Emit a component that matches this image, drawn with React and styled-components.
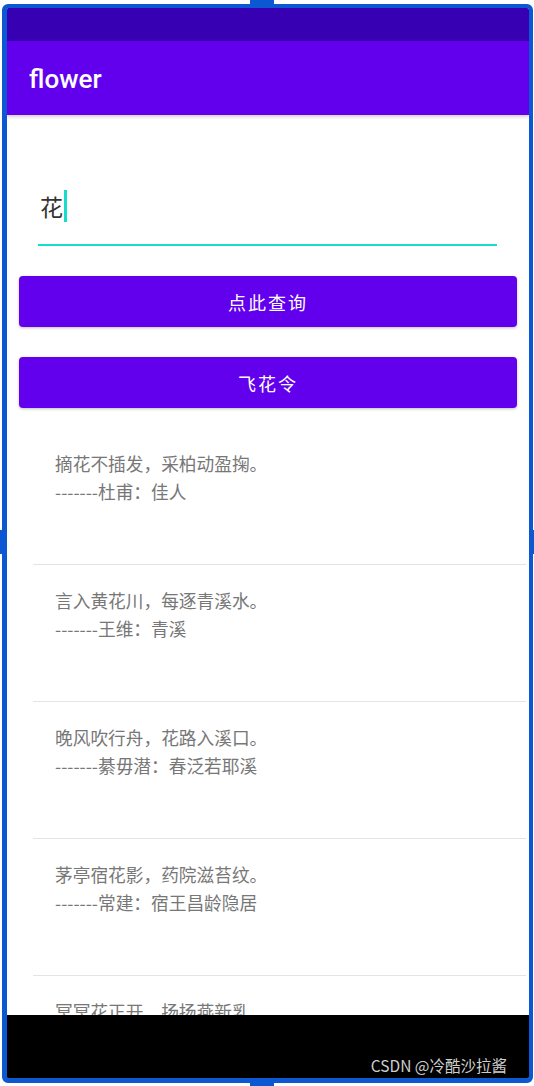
import React from 'react';
import styled, { createGlobalStyle } from 'styled-components';

const GlobalStyle = createGlobalStyle`
  html, body {
    margin: 0;
    padding: 0;
    background: #fff;
  }
  body {
    font-family: "Noto Sans CJK SC", "Noto Sans", sans-serif;
  }
`;

const Page = styled.div`
  width: 534px;
  height: 1086px;
  padding: 4px 1px 3px 2px;
  box-sizing: border-box;
  position: relative;
`;

const Tab = styled.div`
  position: absolute;
  background: #0b58d2;
  ${(p) => p.$side === 'top' && 'top: 0; left: 250px; width: 24px; height: 6px;'}
  ${(p) => p.$side === 'bottom' && 'bottom: 0; left: 250px; width: 24px; height: 6px;'}
  ${(p) => p.$side === 'left' && 'left: 0; top: 530px; width: 6px; height: 24px;'}
  ${(p) => p.$side === 'right' && 'right: 0; top: 530px; width: 6px; height: 24px;'}
`;

const Frame = styled.div`
  position: relative;
  height: 100%;
  border-style: solid;
  border-color: #0b58d2;
  border-width: 4px 4px 5px 5px;
  border-radius: 6px;
  box-sizing: border-box;
  overflow: hidden;
  display: flex;
  flex-direction: column;
  background: #fff;
`;

const StatusBar = styled.div`
  height: 33px;
  flex: none;
  background: #3700b3;
`;

const Toolbar = styled.div`
  height: 74px;
  flex: none;
  background: #6200ee;
  display: flex;
  align-items: center;
  padding-left: 22px;
  box-shadow: 0 2px 3px rgba(0, 0, 0, 0.18);
  position: relative;
  z-index: 1;
`;

const Title = styled.div`
  color: #fff;
  font-family: Roboto, "Noto Sans", sans-serif;
  font-weight: 500;
  font-size: 26px;
  padding-top: 2px;
`;

const Content = styled.div`
  flex: 1;
  overflow: hidden;
`;

const Field = styled.div`
  margin: 0 32px 0 31px;
  padding: 75px 0 22px 2px;
  border-bottom: 2px solid #16dccb;
  display: flex;
  align-items: center;
  height: 32px;
`;

const FieldText = styled.span`
  font-size: 23px;
  color: #333;
  line-height: 32px;
`;

const Caret = styled.span`
  width: 3px;
  height: 32px;
  background: #16dccb;
  margin-left: 1px;
`;

const Button = styled.div`
  margin: 30px 12px 0;
  height: 51px;
  border-radius: 4px;
  background: #6200ee;
  color: #fff;
  font-size: 18px;
  letter-spacing: 2px;
  display: flex;
  align-items: center;
  justify-content: center;
  box-shadow: 0 1px 3px rgba(0, 0, 0, 0.25);
`;

const List = styled.div`
  margin-top: 20px;
`;

const Item = styled.div`
  margin: 0 3px 0 26px;
  padding: 21px 0 59px 22px;
  border-bottom: 1px solid #e4e4e4;
  color: #777;
  font-size: 17.7px;
  line-height: 28px;
`;

const NavBar = styled.div`
  height: 62px;
  flex: none;
  background: #000;
  display: flex;
  justify-content: flex-end;
  align-items: flex-end;
  padding: 0 22px 1px 0;
`;

const Watermark = styled.span`
  color: #cfcfcf;
  font-size: 15.5px;
  line-height: 24px;
`;

const poems = [
  ['摘花不插发，采柏动盈掬。', '-------杜甫：佳人'],
  ['言入黄花川，每逐青溪水。', '-------王维：青溪'],
  ['晚风吹行舟，花路入溪口。', '-------綦毋潜：春泛若耶溪'],
  ['茅亭宿花影，药院滋苔纹。', '-------常建：宿王昌龄隐居'],
  ['冥冥花正开，扬扬燕新乳。', '-------韦应物：长安遇冯著'],
];

const App = () => {
  return (
    <>
      <GlobalStyle />
      <Page>
        <Tab $side="top" />
        <Tab $side="bottom" />
        <Tab $side="left" />
        <Tab $side="right" />
        <Frame>
          <StatusBar />
          <Toolbar>
            <Title>flower</Title>
          </Toolbar>
          <Content>
            <Field>
              <FieldText>花</FieldText>
              <Caret />
            </Field>
            <Button>点此查询</Button>
            <Button>飞花令</Button>
            <List>
              {poems.map((p, i) => (
                <Item key={i}>
                  <div>{p[0]}</div>
                  <div>{p[1]}</div>
                </Item>
              ))}
            </List>
          </Content>
          <NavBar>
            <Watermark>CSDN @冷酷沙拉酱</Watermark>
          </NavBar>
        </Frame>
      </Page>
    </>
  );
};

export default App;
